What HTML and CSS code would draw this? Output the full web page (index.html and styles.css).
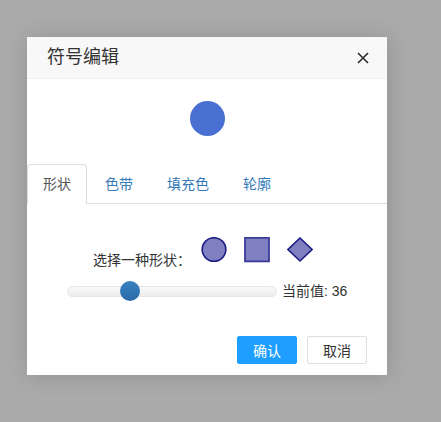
FILE: index.html
```html
<!DOCTYPE html>
<html lang="zh">
<head>
<meta charset="utf-8">
<title>符号编辑</title>
<link rel="stylesheet" href="styles.css">
</head>
<body>
<div class="dialog">
  <div class="dialog-header">
    <span class="dialog-title">符号编辑</span>
    <span class="dialog-close">
      <svg width="12" height="12" viewBox="0 0 12 12"><path d="M1 1 L11 11 M11 1 L1 11" stroke="#2b2b2b" stroke-width="1.6" fill="none"/></svg>
    </span>
  </div>
  <div class="preview"><div class="preview-dot"></div></div>
  <ul class="tabs">
    <li class="tab active">形状</li>
    <li class="tab">色带</li>
    <li class="tab">填充色</li>
    <li class="tab">轮廓</li>
  </ul>
  <div class="tab-body">
    <div class="shape-row">
      <span class="shape-label">选择一种形状：</span>
      <div class="shapes">
        <svg class="shape" width="26" height="26" viewBox="0 0 26 26"><circle cx="13" cy="12.5" r="11.8" fill="#8080c0" stroke="#1c1c86" stroke-width="1.6"/></svg>
        <svg class="shape" width="26" height="26" viewBox="0 0 26 26"><rect x="1" y="0.8" width="24" height="23.6" fill="#8080c0" stroke="#3b3b9c" stroke-width="1.8"/></svg>
        <svg class="shape" width="26" height="26" viewBox="0 0 26 26"><path d="M13 1 L25 12.5 L13 24 L1 12.5 Z" fill="#8080c0" stroke="#1c1c86" stroke-width="1.6"/></svg>
      </div>
    </div>
    <div class="slider-row">
      <div class="track"><div class="thumb"></div></div>
      <span class="value">当前值: 36</span>
    </div>
  </div>
  <div class="footer">
    <button class="btn btn-primary">确认</button>
    <button class="btn">取消</button>
  </div>
</div>
</body>
</html>
```
FILE: styles.css
```css
* { box-sizing: border-box; }
html, body { margin: 0; }
body {
  background: #aaaaaa;
  padding: 37px 0 0 27px;
  font-family: "Liberation Sans", "Noto Sans CJK SC", sans-serif;
  color: #333;
  font-size: 14px;
  height: 422px;
}
.dialog {
  width: 360px;
  height: 338px;
  background: #fff;
  box-shadow: 1px 1px 20px rgba(0,0,0,0.15);
  display: flex;
  flex-direction: column;
}
.dialog-header {
  height: 42px;
  background: #f8f8f8;
  border-bottom: 1px solid #eeeeee;
  display: flex;
  align-items: center;
  justify-content: space-between;
  padding: 0 18px 0 20px;
}
.dialog-title {
  font-size: 18px;
  line-height: 41px;
  color: #333;
}
.dialog-close { display: flex; margin-top: 1px; }
.preview {
  display: flex;
  justify-content: center;
  padding: 22px 0 28px;
}
.preview-dot {
  width: 35px;
  height: 35px;
  border-radius: 50%;
  background: #4a6fd2;
}
.tabs {
  list-style: none;
  margin: 0;
  padding: 0;
  display: flex;
  border-bottom: 1px solid #dddddd;
}
.tab {
  padding: 10px 15px;
  line-height: 18px;
  border: 1px solid transparent;
  border-radius: 4px 4px 0 0;
  margin-right: 2px;
  margin-bottom: -1px;
  color: #337ab7;
}
.tab.active {
  color: #555;
  border-color: #dddddd;
  border-bottom-color: #fff;
  background: #fff;
}
.tab-body { padding-top: 33px; }
.shape-row {
  display: flex;
  align-items: flex-start;
  padding-left: 66px;
}
.shape-label {
  line-height: 20px;
  margin-top: 13px;
  width: 108px;
}
.shapes { display: flex; gap: 17px; }
.shape { display: block; }
.slider-row {
  display: flex;
  align-items: center;
  padding-left: 40px;
  margin-top: 11px;
}
.track {
  position: relative;
  width: 210px;
  height: 11px;
  border: 1px solid #e6e6e6;
  border-radius: 6px;
  background: linear-gradient(#f8f8f8, #ededed);
  margin-right: 5px;
}
.thumb {
  position: absolute;
  left: 52px;
  top: -6px;
  width: 20px;
  height: 20px;
  border-radius: 50%;
  background: linear-gradient(#3881c0, #2b6ba8);
}
.value { line-height: 20px; color: #333; }
.footer {
  margin-top: auto;
  display: flex;
  justify-content: flex-end;
  gap: 10px;
  padding: 0 20px 11px 0;
}
.btn {
  width: 60px;
  height: 28px;
  border: 1px solid #dedede;
  border-radius: 2px;
  background: #fff;
  color: #333;
  font-family: "Liberation Sans", "Noto Sans CJK SC", sans-serif;
  font-size: 14px;
  padding: 0;
}
.btn-primary {
  background: #1e9fff;
  border-color: #1e9fff;
  color: #fff;
}
```
